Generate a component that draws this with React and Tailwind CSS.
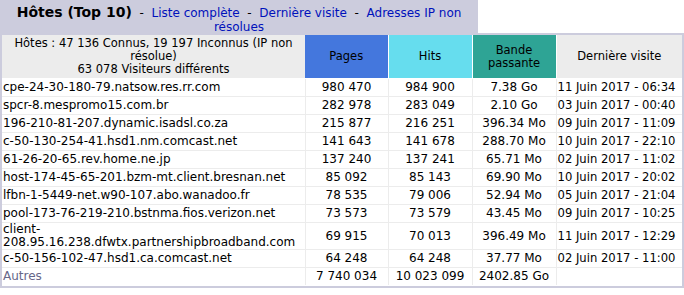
import React from 'react';

const hosts = [
  ['cpe-24-30-180-79.natsow.res.rr.com', '980 470', '984 900', '7.38 Go', '11 Juin 2017 - 06:34'],
  ['spcr-8.mespromo15.com.br', '282 978', '283 049', '2.10 Go', '03 Juin 2017 - 00:40'],
  ['196-210-81-207.dynamic.isadsl.co.za', '215 877', '216 251', '396.34 Mo', '09 Juin 2017 - 11:09'],
  ['c-50-130-254-41.hsd1.nm.comcast.net', '141 643', '141 678', '288.70 Mo', '10 Juin 2017 - 22:10'],
  ['61-26-20-65.rev.home.ne.jp', '137 240', '137 241', '65.71 Mo', '02 Juin 2017 - 11:02'],
  ['host-174-45-65-201.bzm-mt.client.bresnan.net', '85 092', '85 143', '69.90 Mo', '10 Juin 2017 - 20:02'],
  ['lfbn-1-5449-net.w90-107.abo.wanadoo.fr', '78 535', '79 006', '52.94 Mo', '05 Juin 2017 - 21:04'],
  ['pool-173-76-219-210.bstnma.fios.verizon.net', '73 573', '73 579', '43.45 Mo', '09 Juin 2017 - 10:25'],
  [['client-', '208.95.16.238.dfwtx.partnershipbroadband.com'], '69 915', '70 013', '396.49 Mo', '11 Juin 2017 - 12:29'],
  ['c-50-156-102-47.hsd1.ca.comcast.net', '64 248', '64 248', '37.77 Mo', '02 Juin 2017 - 11:00'],
];

const Sep = () => <span>{'\u00a0\u00a0-\u00a0\u00a0'}</span>;

const HostsTable = () => {
  return (
    <div className="w-[684px] bg-white text-black font-['DejaVu_Sans','Verdana',sans-serif] text-[12px] leading-[13px]">
      {/* title */}
      <div className="flex">
        <div className="w-[478px] h-[33px] bg-[#ccccdd] text-center pt-[5px] leading-[14px] text-[12px]">
          <span className="text-[14px] font-bold">Hôtes (Top 10)</span>
          <Sep />
          <a className="text-[#0011bb]">Liste complète</a>
          <Sep />
          <a className="text-[#0011bb]">Dernière visite</a>
          <Sep />
          <a className="text-[#0011bb]">Adresses IP non<br />résolues</a>
        </div>
        <div className="flex-1" />
      </div>

      <div className="border-2 border-[#ccccdd]">
        <table className="w-full table-fixed border-collapse">
          <colgroup>
            <col className="w-[303px]" />
            <col className="w-[83px]" />
            <col className="w-[84px]" />
            <col className="w-[84px]" />
            <col />
          </colgroup>
          <thead className="text-[11.5px]">
            <tr>
              <th className="bg-[#ececec] font-normal text-center py-[2px] border-b border-white">
                Hôtes : 47 136 Connus, 19 197 Inconnus (IP non<br />résolue)<br />63 078 Visiteurs différents
              </th>
              <th className="bg-[#4477dd] font-normal text-center border-b border-white">Pages</th>
              <th className="bg-[#66ddee] font-normal text-center border-l border-b border-white">Hits</th>
              <th className="bg-[#2ea495] font-normal text-center border-l border-b border-white">Bande<br />passante</th>
              <th className="bg-[#ececec] font-normal text-center border-l border-b border-white">Dernière visite</th>
            </tr>
          </thead>
          <tbody>
            {hosts.map(([host, pages, hits, bw, date], i) => (
              <tr key={i} className={Array.isArray(host) ? 'h-[27px]' : 'h-[18px]'}>
                <td className="p-0 pl-[1px] border-b border-[#ececec] text-left">
                  {Array.isArray(host) ? <>{host[0]}<br />{host[1]}</> : host}
                </td>
                <td className="p-0 border-l border-b border-[#ececec] text-center">{pages}</td>
                <td className="p-0 border-l border-b border-[#ececec] text-center">{hits}</td>
                <td className="p-0 border-l border-b border-[#ececec] text-center">{bw}</td>
                <td className="p-0 pl-[1px] border-l border-b border-[#ececec] text-left whitespace-nowrap text-[11.6px]">{date}</td>
              </tr>
            ))}
            <tr className="h-[18px]">
              <td className="p-0 pl-[1px] border-b border-white text-left text-[#666688]">Autres</td>
              <td className="p-0 border-l border-b border-l-[#ececec] border-b-white text-center">7 740 034</td>
              <td className="p-0 border-l border-b border-l-[#ececec] border-b-white text-center">10 023 099</td>
              <td className="p-0 border-l border-b border-l-[#ececec] border-b-white text-center">2402.85 Go</td>
              <td className="p-0 border-l border-b border-l-[#ececec] border-b-white"></td>
            </tr>
          </tbody>
        </table>
      </div>
    </div>
  );
};

export default function App() {
  return <HostsTable />;
}
